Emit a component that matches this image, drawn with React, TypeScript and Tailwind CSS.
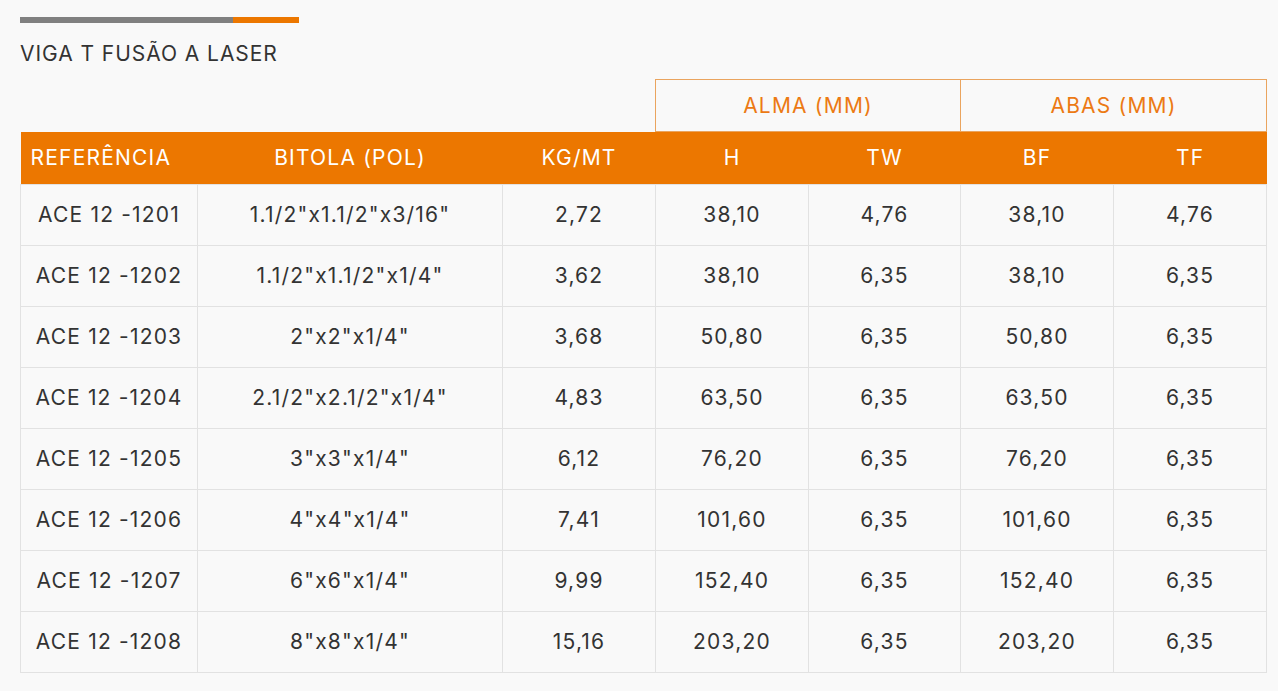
import React from "react";

const rows = [
  ["ACE 12 -1201", '1.1/2"x1.1/2"x3/16"', "2,72", "38,10", "4,76", "38,10", "4,76"],
  ["ACE 12 -1202", '1.1/2"x1.1/2"x1/4"', "3,62", "38,10", "6,35", "38,10", "6,35"],
  ["ACE 12 -1203", '2"x2"x1/4"', "3,68", "50,80", "6,35", "50,80", "6,35"],
  ["ACE 12 -1204", '2.1/2"x2.1/2"x1/4"', "4,83", "63,50", "6,35", "63,50", "6,35"],
  ["ACE 12 -1205", '3"x3"x1/4"', "6,12", "76,20", "6,35", "76,20", "6,35"],
  ["ACE 12 -1206", '4"x4"x1/4"', "7,41", "101,60", "6,35", "101,60", "6,35"],
  ["ACE 12 -1207", '6"x6"x1/4"', "9,99", "152,40", "6,35", "152,40", "6,35"],
  ["ACE 12 -1208", '8"x8"x1/4"', "15,16", "203,20", "6,35", "203,20", "6,35"],
];

const widths = [177, 305, 153, 153, 152, 153, 153];

export default function App() {
  return (
    <div className="min-h-[691px] w-full bg-[#f9f9f9] px-[20px] pt-[17px] text-[#333]" style={{ fontFamily: "Inter, 'Noto Sans', sans-serif" }}>
      <div className="flex h-[6px] w-[279px]">
        <div className="h-full w-[213px] bg-[#808080]" />
        <div className="h-full flex-1 bg-[#ec7700]" />
      </div>
      <div className="mt-[19px] text-[21px] leading-[24px] tracking-[0.95px] text-[#333]">VIGA T FUSÃO A LASER</div>
      <table className="mt-[13px] w-[1246px] table-fixed border-collapse text-[21px] tracking-[1.2px]">
        <colgroup>
          {widths.map((w, i) => (
            <col key={i} style={{ width: w }} />
          ))}
        </colgroup>
        <thead>
          <tr className="h-[52px]">
            <th colSpan={3} className="p-0" />
            <th colSpan={2} className="border border-[#eaa45e] p-0 text-center font-normal text-[#ec7a14]">ALMA (MM)</th>
            <th colSpan={2} className="border border-[#eaa45e] p-0 text-center font-normal text-[#ec7a14]">ABAS (MM)</th>
          </tr>
          <tr className="h-[53px] bg-[#ec7700] text-white">
            <th className="px-[10px] text-left font-normal">REFERÊNCIA</th>
            <th className="text-center font-normal">BITOLA (POL)</th>
            <th className="text-center font-normal">KG/MT</th>
            <th className="text-center font-normal">H</th>
            <th className="text-center font-normal">TW</th>
            <th className="text-center font-normal">BF</th>
            <th className="text-center font-normal">TF</th>
          </tr>
        </thead>
        <tbody>
          {rows.map((r, i) => (
            <tr key={i} className="h-[61px]">
              {r.map((c, j) => (
                <td key={j} className="border border-[#e2e2e2] p-0 text-center">
                  {c}
                </td>
              ))}
            </tr>
          ))}
        </tbody>
      </table>
    </div>
  );
}
